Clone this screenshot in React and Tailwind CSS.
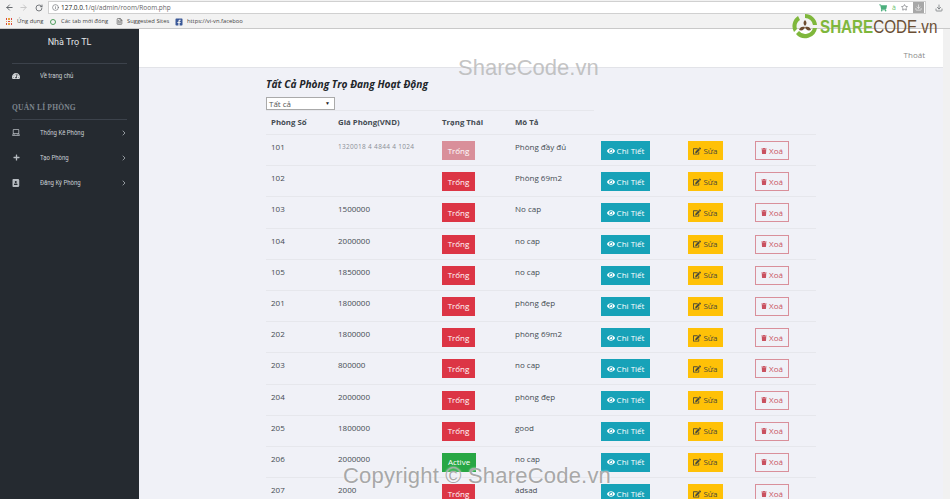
import { ArrowLeft, ArrowRight, RotateCw, Info, Star, Download, ChevronRight, FileText } from "lucide-react";
import { FaEye, FaEdit, FaTrash, FaPlus, FaLaptop, FaTachometerAlt, FaAddressBook, FaFacebookSquare, FaShoppingCart } from "react-icons/fa";

const rooms = [
  { so: "101", gia: "1320018 4 4844 4 1024", moTa: "Phòng đầy đủ", faded: true },
  { so: "102", gia: "", moTa: "Phòng 69m2" },
  { so: "103", gia: "1500000", moTa: "No cap" },
  { so: "104", gia: "2000000", moTa: "no cap" },
  { so: "105", gia: "1850000", moTa: "no cap" },
  { so: "201", gia: "1800000", moTa: "phòng đẹp" },
  { so: "202", gia: "1800000", moTa: "phòng 69m2" },
  { so: "203", gia: "800000", moTa: "no cap" },
  { so: "204", gia: "2000000", moTa: "phòng đẹp" },
  { so: "205", gia: "1800000", moTa: "good" },
  { so: "206", gia: "2000000", moTa: "no cap", active: true },
  { so: "207", gia: "2000", moTa: "ádsad" },
];

const menu = [
  { label: "Thống Kê Phòng", icon: <FaLaptop className="text-[9px]" /> },
  { label: "Tạo Phòng", icon: <FaPlus className="text-[7px]" /> },
  { label: "Đăng Ký Phòng", icon: <FaAddressBook className="text-[8px]" /> },
];

function BrowserBar() {
  return (
    <div className="h-[29px] shrink-0 bg-[#f2f2f2] border-b border-[#c9c9c9] font-['Open_Sans',sans-serif]">
      <div className="flex h-[15px] items-center pl-[5px] pr-[7px] text-[#5f6368]">
        <ArrowLeft size={9} strokeWidth={2.5} />
        <ArrowRight size={9} strokeWidth={2.5} className="ml-[5px] text-[#c4c4c4]" />
        <RotateCw size={8} strokeWidth={2.5} className="ml-[7px]" />
        <div className="ml-[5px] flex h-[13px] flex-1 items-center border border-[#d0d0d0] bg-white pl-[3px] pr-[1px]">
          <Info size={7} />
          <span className="ml-[2px] text-[6.5px] text-[#666]">
            <span className="text-[#222]">127.0.0.1</span>/ql/admin/room/Room.php
          </span>
          <div className="ml-auto flex items-center gap-[5px]">
            <FaShoppingCart className="text-[8px] text-[#4caf7d]" />
            <span className="text-[7px] leading-none text-[#6cbf6c]">à</span>
            <Star size={7} />
            <span className="flex h-[11px] w-[11px] items-center justify-center bg-[#a8a8a8] text-white">
              <Download size={7} />
            </span>
          </div>
        </div>
        <Download size={8} className="ml-[9px]" />
      </div>
      <div className="flex h-[13px] items-center pl-[6px] text-[5.8px] text-[#444]">
        <div className="grid w-[6px] grid-cols-3 gap-[1px]">
          {[0, 1, 2, 3, 4, 5, 6, 7, 8].map((i) => (
            <span key={i} className={`h-[1.5px] ${i % 2 ? "bg-[#e8a33d]" : "bg-[#d9493e]"}`} />
          ))}
        </div>
        <span className="ml-[5px] w-[27px]">Ứng dụng</span>
        <span className="ml-[6px] h-[6px] w-[6px] rounded-full border border-[#4f9d5d]" />
        <span className="ml-[5px] w-[48px] whitespace-nowrap">Các tab mới đóng</span>
        <FileText size={7} className="ml-[7px]" />
        <span className="ml-[4px] w-[43px] whitespace-nowrap">Suggested Sites</span>
        <FaFacebookSquare className="ml-[5px] text-[8px] text-[#3b5998]" />
        <span className="ml-[4px] whitespace-nowrap">https://vi-vn.faceboo</span>
      </div>
    </div>
  );
}

function Sidebar() {
  return (
    <aside className="w-[139px] shrink-0 bg-[#252a30] text-[#c9ced3] font-['Roboto',sans-serif]">
      <div className="h-[34px] pt-[7px] text-center text-[9px] leading-[13px] text-[#e4e6e8]">Nhà Trọ TL</div>
      <div className="mx-[12px] border-t border-[#3c424b]" />
      <div className="flex h-[23px] items-center pl-[12px] pt-[1px] text-[7.5px]">
        <FaTachometerAlt className="w-[8px] text-[8px] text-[#d5d8db]" />
        <span className="ml-[20px] origin-left scale-x-[0.8] whitespace-nowrap">Về trang chủ</span>
      </div>
      <div className="mt-[16px] pl-[12px] font-['Liberation_Serif',serif] text-[7.5px] font-bold leading-[10px] tracking-[0.2px] text-[#7d858d]">
        QUẢN LÍ PHÒNG
      </div>
      <div className="mx-[12px] mt-[6px] border-t border-[#3c424b]" />
      {menu.map((m) => (
        <div key={m.label} className="flex h-[25px] items-center px-[12px] text-[7.5px]">
          <span className="flex w-[8px] justify-center text-[#b7bcc1]">{m.icon}</span>
          <span className="ml-[20px] origin-left scale-x-[0.8] whitespace-nowrap">{m.label}</span>
          <ChevronRight size={8} className="ml-auto translate-x-[1px]" />
        </div>
      ))}
    </aside>
  );
}

function RoomRow({ room }) {
  const statusColor = room.active ? "bg-[#28a745] w-[34px]" : room.faded ? "bg-[#d98f9a] w-[33px]" : "bg-[#dc3545] w-[33px]";
  return (
    <div className="grid h-[31.2px] grid-cols-[72px_104px_73px_86px_87px_67px_61px] border-t border-[#e6e7ec] pt-[6px] text-[8px] text-[#444b52]">
      <div className="pl-[5px] leading-[11px]">{room.so}</div>
      <div className={`leading-[11px] whitespace-nowrap ${room.faded ? "text-[6.5px] tracking-[0.3px] opacity-60" : ""}`}>{room.gia}</div>
      <div>
        <div className={`flex h-[19px] items-center justify-center text-[8px] text-white ${statusColor}`}>
          {room.active ? "Active" : "Trống"}
        </div>
      </div>
      <div className="leading-[11px]">{room.moTa}</div>
      <div>
        <div className="flex h-[19px] w-[49px] items-center justify-center gap-[2px] bg-[#17a2b8] text-white">
          <FaEye className="text-[8px]" /> Chi Tiết
        </div>
      </div>
      <div>
        <div className="flex h-[19px] w-[35px] items-center justify-center gap-[2px] bg-[#ffc107] text-[#4a4a3a]">
          <FaEdit className="text-[8px]" /> Sửa
        </div>
      </div>
      <div>
        <div className="flex h-[19px] w-[34px] items-center justify-center gap-[2px] border border-[#d98f9a] text-[#c9515f]">
          <FaTrash className="text-[6px]" /> Xoá
        </div>
      </div>
    </div>
  );
}

function Logo() {
  return (
    <div className="absolute left-[791px] top-[12px] flex w-[150px] items-center">
      <svg width="28" height="28" viewBox="0 0 28 28" className="shrink-0">
        <path d="M14 2a12 12 0 0 1 12 11h-4a8 8 0 0 0-8-7z" fill="#7fb73c" />
        <path d="M26 16a12 12 0 0 1-21 6l3-3a8 8 0 0 0 14-3z" fill="#7fb73c" />
        <path d="M3 20a12 12 0 0 1 4-16l2 4a8 8 0 0 0-3 9z" fill="#7fb73c" />
        <path d="M14 8c2 2 2 4 0 6-2-2-2-4 0-6z" fill="#6b4a2e" />
        <path d="M8 18c1-3 3-4 6-3-1 3-3 4-6 3z" fill="#6b4a2e" />
        <path d="M20 18c-3 1-5 0-6-3 3-1 5 0 6 3z" fill="#6b4a2e" />
      </svg>
      <span className="ml-[1px] origin-left scale-x-[0.8] whitespace-nowrap font-['Liberation_Sans',sans-serif] text-[19px] leading-none">
        <span className="font-bold text-[#7fb73c]">SHARE</span>
        <span className="text-[#6b4f35]">CODE.vn</span>
      </span>
    </div>
  );
}

export default function App() {
  return (
    <div className="relative flex h-[499px] w-[950px] flex-col overflow-hidden bg-[#f0f1f7] font-['Open_Sans',sans-serif]">
      <BrowserBar />
      <div className="flex min-h-0 flex-1">
        <Sidebar />
        <div className="min-w-0 flex-1">
          <header className="flex h-[39px] items-start justify-end border-b border-[#e2e3e8] bg-white pt-[20px] pr-[18px] text-[8px] text-[#8a8a8a]">
            Thoát
          </header>
          <main className="pl-[127px] pt-[9px]">
            <h1 className="text-[10.2px] font-bold italic leading-[15px] text-[#212529]">Tất Cả Phòng Trọ Đang Hoạt Động</h1>
            <div className="mt-[5px] flex h-[13px] w-[69px] items-center justify-between border border-[#aaa] bg-white pl-[2px] pr-[4px] text-[8px] text-[#555]">
              Tất cả
              <span className="text-[5px] text-[#222]">▼</span>
            </div>
            <div className="grid h-[24px] w-[328px] grid-cols-[72px_104px_73px_79px] items-center border-t border-[#e6e7ec] text-[7.8px] font-bold text-[#444b52]">
              <div className="pl-[5px]">Phòng Số</div>
              <div>Giá Phòng(VND)</div>
              <div>Trạng Thái</div>
              <div>Mô Tả</div>
            </div>
            <div className="w-[550px]">
              {rooms.map((r) => (
                <RoomRow key={r.so} room={r} />
              ))}
            </div>
          </main>
        </div>
        <div className="w-[7px] shrink-0 bg-[#f1f1f1]" />
      </div>
      <Logo />
      <div className="pointer-events-none absolute left-[458px] top-[56px] font-['Liberation_Sans',sans-serif] text-[22px] leading-[24px] text-[#b5b5b5]/80">
        ShareCode.vn
      </div>
      <div className="pointer-events-none absolute left-[343px] top-[464px] font-['Liberation_Sans',sans-serif] text-[22px] leading-[24px] tracking-[0.2px] text-[#a8a8a8] [text-shadow:0_0_2px_#fff]">
        Copyright © ShareCode.vn
      </div>
    </div>
  );
}
